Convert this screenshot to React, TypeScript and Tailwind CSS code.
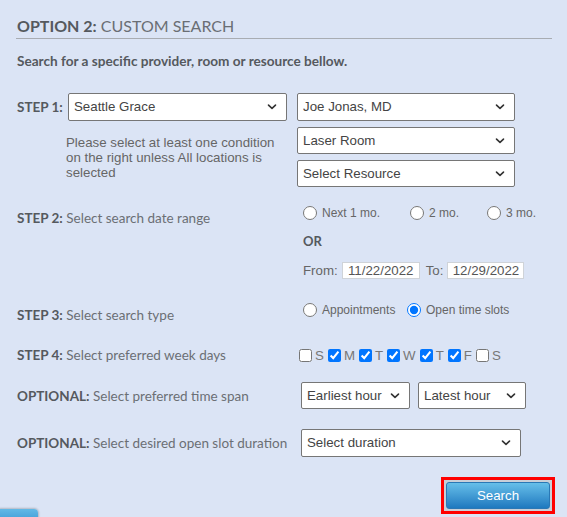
import React from "react";

const arial = "font-['Liberation_Sans',Arial,sans-serif]";

function Chevron() {
  return (
    <svg width="10" height="7" viewBox="0 0 10 7" className="pointer-events-none">
      <path d="M1.5 1.6 L5 4.9 L8.5 1.6" fill="none" stroke="#333" strokeWidth="1.6" strokeLinecap="round" strokeLinejoin="round" />
    </svg>
  );
}

function Sel({ value, cls }: { value: string; cls: string }) {
  return (
    <div className={`relative flex items-center rounded-[2px] border border-[#767676] bg-white ${cls}`}>
      <select
        defaultValue={value}
        className={`h-full w-full appearance-none bg-transparent pl-[5px] pr-[24px] text-[13.3px] text-[#444] outline-none ${arial}`}
      >
        <option>{value}</option>
      </select>
      <span className="pointer-events-none absolute right-[9px] top-1/2 flex -translate-y-1/2">
        <Chevron />
      </span>
    </div>
  );
}

function Label({ b, t, cls }: { b: string; t?: string; cls: string }) {
  return (
    <div className={`pl-[1px] font-['Lato',sans-serif] text-[13.5px] leading-[16px] text-[#6b6f74] ${cls}`}>
      <span className="font-bold text-[#55595e]">{b}</span>
      {t ? " " + t : ""}
    </div>
  );
}

function Radio({ label, checked, name, cls }: { label: string; checked?: boolean; name: string; cls: string }) {
  return (
    <label className={`flex items-center ${cls}`}>
      <input type="radio" name={name} defaultChecked={checked} className="m-0 h-[14px] w-[14px]" />
      <span className={`ml-[5px] text-[12px] leading-[14px] text-[#666] ${arial}`}>{label}</span>
    </label>
  );
}

export default function App() {
  const days: [string, boolean][] = [
    ["S", false],
    ["M", true],
    ["T", true],
    ["W", true],
    ["T", true],
    ["F", true],
    ["S", false],
  ];
  return (
    <div className="relative min-h-[517px] w-full overflow-hidden bg-[#dbe4f5] pl-[16px] pr-[15px] pt-[16px]">
      <h2 className="border-b border-[#a8acb2] pb-[2px] pl-[1px] font-['Lato',sans-serif] text-[16px] leading-[20px] text-[#6a6e74]">
        <span className="font-bold text-[#55595e]">OPTION 2:</span> CUSTOM SEARCH
      </h2>

      <p className="mt-[14px] pl-[1px] font-['Lato',sans-serif] text-[13.6px] font-bold leading-[16px] text-[#55595e]">
        Search for a specific provider, room or resource bellow.
      </p>

      {/* STEP 1 */}
      <div className="mt-[24px] flex">
        <div className="flex flex-col">
          <div className="flex items-center">
            <Label b="STEP 1:" cls="w-[52px]" />
            <Sel value="Seattle Grace" cls="h-[28px] w-[219px]" />
          </div>
          <p className={`mt-[14px] pl-[50px] text-[13.3px] leading-[15px] text-[#666] ${arial}`}>
            Please select at least one condition
            <br />
            on the right unless All locations is
            <br />
            selected
          </p>
        </div>
        <div className="ml-[10px] flex flex-col gap-[6px]">
          <Sel value="Joe Jonas, MD" cls="h-[28px] w-[218px]" />
          <Sel value="Laser Room" cls="h-[27px] w-[218px]" />
          <Sel value="Select Resource" cls="h-[27px] w-[218px]" />
        </div>
      </div>

      {/* STEP 2 */}
      <div className="mt-[18px] flex items-start">
        <Label b="STEP 2:" t="Select search date range" cls="mt-[5px] w-[287px]" />
        <div className="flex flex-col">
          <div className="flex h-[16px] items-center">
            <Radio name="range" label="Next 1 mo." cls="w-[107px]" />
            <Radio name="range" label="2 mo." cls="w-[77px]" />
            <Radio name="range" label="3 mo." cls="" />
          </div>
          <div className="mt-[12px] font-['Lato',sans-serif] text-[13px] font-bold leading-[16px] text-[#55595e]">OR</div>
          <div className={`mt-[13px] flex h-[17px] items-center text-[13.3px] leading-[15px] text-[#666] ${arial}`}>
            <span>From:</span>
            <input
              defaultValue="11/22/2022"
              className="ml-[4px] h-[17px] w-[78px] border border-[#cfd3d8] bg-white px-[4px] text-center text-[13.3px] leading-[15px] text-[#555] outline-none"
            />
            <span className="ml-[6px]">To:</span>
            <input
              defaultValue="12/29/2022"
              className="ml-[4px] h-[17px] w-[77px] border border-[#cfd3d8] bg-white px-[4px] text-center text-[13.3px] leading-[15px] text-[#555] outline-none"
            />
          </div>
        </div>
      </div>

      {/* STEP 3 */}
      <div className="mt-[23px] flex items-start">
        <Label b="STEP 3:" t="Select search type" cls="mt-[5px] w-[287px]" />
        <div className="flex h-[16px] items-center">
          <Radio name="type" label="Appointments" cls="w-[104px]" />
          <Radio name="type" label="Open time slots" checked cls="" />
        </div>
      </div>

      {/* STEP 4 */}
      <div className="mt-[24px] flex h-[16px] items-center">
        <Label b="STEP 4:" t="Select preferred week days" cls="w-[283px]" />
        <div className="flex items-center">
          {days.map(([d, c], i) => (
            <label key={i} className="mr-[4px] flex items-center">
              <input type="checkbox" defaultChecked={c} className="m-0 h-[13px] w-[13px]" />
              <span className={`ml-[3px] text-[13.3px] leading-[15px] text-[#777] ${arial}`}>{d}</span>
            </label>
          ))}
        </div>
      </div>

      {/* OPTIONAL 1 */}
      <div className="mt-[19px] flex items-center">
        <Label b="OPTIONAL:" t="Select preferred time span" cls="w-[285px]" />
        <Sel value="Earliest hour" cls="h-[27px] w-[109px]" />
        <Sel value="Latest hour" cls="ml-[8px] h-[27px] w-[108px]" />
      </div>

      {/* OPTIONAL 2 */}
      <div className="mt-[20px] flex items-center">
        <Label b="OPTIONAL:" t="Select desired open slot duration" cls="w-[285px]" />
        <Sel value="Select duration" cls="h-[28px] w-[220px]" />
      </div>

      {/* SEARCH */}
      <div className="-mr-[3px] mt-[20px] flex justify-end">
        <div className="h-[37px] w-[114px] border-[3px] border-[#ff0000] bg-[#c9cfd8] p-[2px]">
          <button
            className={`flex h-full w-full items-center justify-center rounded-[3px] border border-[#2a78b5] bg-gradient-to-b from-[#66bfe9] to-[#1d79bf] text-[13.3px] text-white ${arial}`}
          >
            Search
          </button>
        </div>
      </div>

      <div className="absolute left-0 top-[509px] h-[14px] w-[38px] rounded-tr-[4px] bg-gradient-to-b from-[#62b9e6] to-[#3b98d5] shadow-[0_0_2px_1px_rgba(0,0,0,0.2)]" />
    </div>
  );
}
